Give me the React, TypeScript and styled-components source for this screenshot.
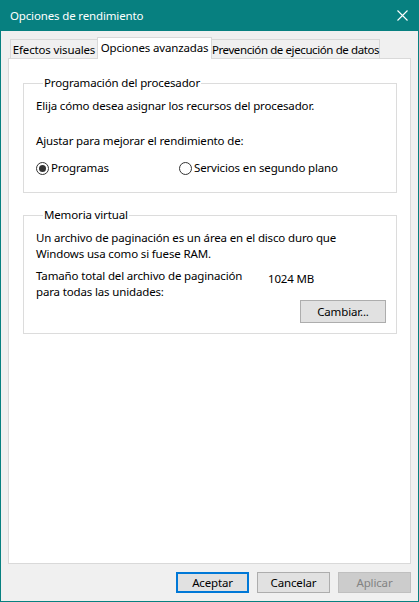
import React from "react";
import styled, { createGlobalStyle, css } from "styled-components";

const TEAL = "#078080";
const FONT = `"Noto Sans", "Liberation Sans", sans-serif`;

const Global = createGlobalStyle`
  html, body { margin: 0; padding: 0; background: #ffffff; }
  * { box-sizing: border-box; }
  body { font-family: ${FONT}; font-size: 11.5px; letter-spacing: -0.15px; color: #000; }
`;

const Window = styled.div`
  width: 419px;
  height: 602px;
  display: flex;
  flex-direction: column;
  border: 1px solid ${TEAL};
  border-top: none;
  background: #f0f0f0;
`;

const TitleBar = styled.div`
  height: 31px;
  flex: none;
  margin: 0 -1px;
  background: ${TEAL};
  color: #fff;
  display: flex;
  align-items: center;
  padding-left: 10px;
  line-height: 16px;
`;

const Title = styled.span`
  flex: 1;
`;

const CloseButton = styled.div`
  width: 46px;
  height: 31px;
  display: flex;
  align-items: center;
  justify-content: center;
  margin-right: -6px;
`;

const Body = styled.div`
  flex: 1;
  display: flex;
  flex-direction: column;
  padding: 6px 7px 8px 7px;
`;

const TabStrip = styled.div`
  height: 21px;
  flex: none;
  display: flex;
  align-items: flex-end;
  padding-left: 3px;
`;

const Tab = styled.div<{ $w: number; $active?: boolean; $ls?: number }>`
  width: ${(p) => p.$w}px;
  flex: none;
  height: 19px;
  margin-left: -1px;
  border: 1px solid #d9d9d9;
  border-bottom: none;
  background: #f0f0f0;
  display: flex;
  align-items: center;
  justify-content: center;
  line-height: 16px;
  white-space: nowrap;
  padding-top: 1px;
  letter-spacing: ${(p) => p.$ls ?? -0.15}px;
  ${(p) =>
    p.$active &&
    css`
      height: 22px;
      margin-bottom: -1px;
      background: #fff;
      position: relative;
      z-index: 1;
      padding-top: 0;
      padding-bottom: 2px;
    `}
`;

const Panel = styled.div`
  flex: 1;
  background: #fff;
  border: 1px solid #d9d9d9;
  padding: 16px 13px 0 14px;
  display: flex;
  flex-direction: column;
  gap: 14px;
`;

const Group = styled.fieldset<{ $pb: number }>`
  margin: 0;
  border: 1px solid #dcdcdc;
  padding: 7px 10px ${(p) => p.$pb}px 12px;
  min-width: 0;
`;

const Legend = styled.legend`
  margin-left: 7px;
  padding: 0 1px;
  line-height: 16px;
`;

const Line = styled.div<{ $mt?: number }>`
  line-height: 16px;
  margin-top: ${(p) => p.$mt ?? 0}px;
`;

const RadioRow = styled.div`
  display: flex;
  height: 16px;
  margin-top: 11px;
`;

const RadioLabel = styled.label<{ $w?: number }>`
  display: flex;
  align-items: center;
  gap: 2px;
  line-height: 16px;
  width: ${(p) => (p.$w ? `${p.$w}px` : "auto")};
`;

const RadioDot = styled.span<{ $on?: boolean }>`
  width: 13px;
  height: 13px;
  border-radius: 50%;
  border: 1px solid #333;
  background: #fff;
  display: flex;
  align-items: center;
  justify-content: center;
  flex: none;
  &::after {
    content: "";
    width: 7px;
    height: 7px;
    border-radius: 50%;
    background: ${(p) => (p.$on ? "#333" : "transparent")};
  }
`;

const SizeRow = styled.div`
  display: flex;
  margin-top: 6px;
`;

const SizeLabel = styled.div`
  width: 232px;
  line-height: 16px;
`;

const SizeValue = styled.div`
  line-height: 16px;
  margin-top: 3px;
`;

const RightAligned = styled.div`
  display: flex;
  justify-content: flex-end;
`;

type Kind = "normal" | "default" | "disabled";

const Button = styled.div<{ $w: number; $h: number; $kind?: Kind }>`
  width: ${(p) => p.$w}px;
  height: ${(p) => p.$h}px;
  background: #e1e1e1;
  border: 1px solid #adadad;
  display: flex;
  align-items: center;
  justify-content: center;
  line-height: 16px;
  ${(p) =>
    p.$kind === "default" &&
    css`
      border: 2px solid #0078d7;
    `}
  ${(p) =>
    p.$kind === "disabled" &&
    css`
      background: #cccccc;
      border-color: #bfbfbf;
      color: #838383;
    `}
`;

const Footer = styled.div`
  display: flex;
  justify-content: flex-end;
  gap: 8px;
  margin-top: 8px;
  flex: none;
`;

export default function App() {
  return (
    <>
      <Global />
      <Window>
        <TitleBar>
          <Title>Opciones de rendimiento</Title>
          <CloseButton>
            <svg width="11" height="11" viewBox="0 0 11 11">
              <path d="M0.5 0.5 L10.5 10.5 M10.5 0.5 L0.5 10.5" stroke="#fff" strokeWidth="1.1" />
            </svg>
          </CloseButton>
        </TitleBar>
        <Body>
          <TabStrip>
            <Tab $w={88}>Efectos visuales</Tab>
            <Tab $w={115} $active>
              Opciones avanzadas
            </Tab>
            <Tab $w={169} $ls={-0.4}>
              Prevención de ejecución de datos
            </Tab>
          </TabStrip>
          <Panel>
            <Group $pb={16}>
              <Legend>Programación del procesador</Legend>
              <Line>Elija cómo desea asignar los recursos del procesador.</Line>
              <Line $mt={19}>Ajustar para mejorar el rendimiento de:</Line>
              <RadioRow>
                <RadioLabel $w={143}>
                  <RadioDot $on />
                  Programas
                </RadioLabel>
                <RadioLabel>
                  <RadioDot />
                  Servicios en segundo plano
                </RadioLabel>
              </RadioRow>
            </Group>
            <Group $pb={10}>
              <Legend>Memoria virtual</Legend>
              <Line>Un archivo de paginación es un área en el disco duro que</Line>
              <Line>Windows usa como si fuese RAM.</Line>
              <SizeRow>
                <SizeLabel>
                  Tamaño total del archivo de paginación
                  <br />
                  para todas las unidades:
                </SizeLabel>
                <SizeValue>1024 MB</SizeValue>
              </SizeRow>
              <RightAligned>
                <Button $w={86} $h={23}>
                  Cambiar...
                </Button>
              </RightAligned>
            </Group>
          </Panel>
          <Footer>
            <Button $w={73} $h={21} $kind="default">
              Aceptar
            </Button>
            <Button $w={73} $h={21}>
              Cancelar
            </Button>
            <Button $w={73} $h={21} $kind="disabled">
              Aplicar
            </Button>
          </Footer>
        </Body>
      </Window>
    </>
  );
}
